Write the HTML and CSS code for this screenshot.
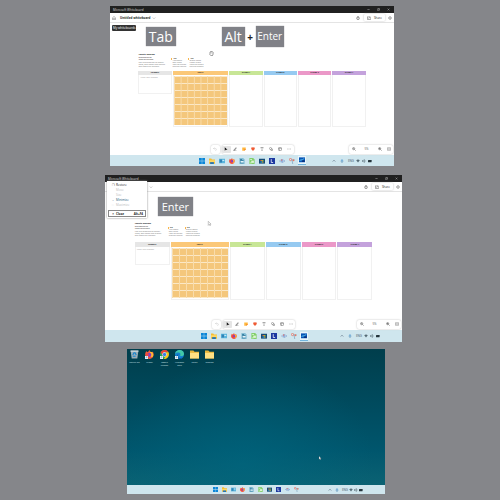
FILE: index.html
```html
<!DOCTYPE html>
<html lang="en">
<head>
<meta charset="utf-8">
<title>Whiteboard keyboard steps</title>
<link rel="stylesheet" href="styles.css">
</head>
<body>
<svg class="sprite" aria-hidden="true">
  <symbol id="home" viewBox="0 0 16 16"><path d="M2 7 8 2l6 5v8h-4v-5H6v5H2z" fill="none" stroke="#555" stroke-width="1.6"/></symbol>
  <symbol id="down" viewBox="0 0 16 16"><path d="m3 6 5 5 5-5" fill="none" stroke="#777" stroke-width="1.5"/></symbol>
  <symbol id="up" viewBox="0 0 16 16"><path d="m3 10 5-5 5 5" fill="none" stroke="#456" stroke-width="2.2"/></symbol>
  <symbol id="min" viewBox="0 0 16 16"><path d="M2 8h12" stroke="#ccc" stroke-width="2.2"/></symbol>
  <symbol id="restore" viewBox="0 0 16 16"><path d="M2 5h9v9H2zM5 5V2h9v9h-3" fill="none" stroke="#ccc" stroke-width="1.8"/></symbol>
  <symbol id="close" viewBox="0 0 16 16"><path d="m3 3 10 10M13 3 3 13" stroke="#ccc" stroke-width="2"/></symbol>
  <symbol id="timer" viewBox="0 0 16 16"><circle cx="8" cy="9" r="5.5" fill="#eee" stroke="#444" stroke-width="1.8"/><path d="M5 1h6M8 5v4" stroke="#444" stroke-width="1.8"/></symbol>
  <symbol id="share" viewBox="0 0 16 16"><path d="M7 3H2v11h12V9M6 10c0-4 3-5 7-5M10 1l4 4-4 4" fill="none" stroke="#444" stroke-width="1.8"/></symbol>
  <symbol id="gear" viewBox="0 0 16 16"><circle cx="8" cy="8" r="5.5" fill="none" stroke="#666" stroke-width="2.8" stroke-dasharray="2.6 1.1"/><circle cx="8" cy="8" r="2.2" fill="none" stroke="#555" stroke-width="1.5"/></symbol>
  <symbol id="undo" viewBox="0 0 16 16"><path d="M6 2 2 6l4 4M2 6h7c6 0 6 8 0 8" fill="none" stroke="#bbb" stroke-width="1.6"/></symbol>
  <symbol id="select" viewBox="0 0 16 16"><path d="M3 1v14l4-4h7z" fill="#111"/></symbol>
  <symbol id="pen" viewBox="0 0 16 16"><path d="m4 11 8-9 2 2-7 9-4 1z" fill="#999" stroke="#444"/><path d="M1 15h13" stroke="#777" stroke-width="2"/></symbol>
  <symbol id="note" viewBox="0 0 16 16"><path d="M1 2h14v8l-5 5H1z" fill="#ffb73c"/><path d="M15 9h-5v6z" fill="#e85a20"/></symbol>
  <symbol id="heart" viewBox="0 0 16 16"><path d="M8 15C-3 8 1 1 5 1c2 0 3 2 3 2s1-2 3-2c4 0 8 7-3 14" fill="#ef5b34"/></symbol>
  <symbol id="text" viewBox="0 0 16 16"><path d="M3 5V2h10v3M8 2v12M6 14h4" fill="none" stroke="#444" stroke-width="1.5"/></symbol>
  <symbol id="shapes" viewBox="0 0 16 16"><circle cx="6" cy="6" r="4.2" fill="none" stroke="#444" stroke-width="1.5"/><path d="M8 8h6v6H8z" fill="#fff" stroke="#444" stroke-width="1.5"/></symbol>
  <symbol id="create" viewBox="0 0 16 16"><rect x="2" y="2" width="12" height="12" rx="2" fill="none" stroke="#555" stroke-width="1.7"/><path d="M2 6h12M6 6v8" stroke="#555" stroke-width="1.5"/></symbol>
  <symbol id="more" viewBox="0 0 16 16"><path d="M2 8h2.5M7 8h2.500M12 8h2.500" stroke="#555" stroke-width="2"/></symbol>
  <symbol id="zoomout" viewBox="0 0 16 16"><circle cx="6.500" cy="6.500" r="4.500" fill="#ddd" stroke="#444" stroke-width="1.6"/><path d="m10 10 5 5M4.500 6.500h4" stroke="#444" stroke-width="1.7"/></symbol>
  <symbol id="zoomin" viewBox="0 0 16 16"><circle cx="6.500" cy="6.500" r="4.500" fill="#ddd" stroke="#444" stroke-width="1.6"/><path d="m10 10 5 5M4 6.500h5M6.500 4v5" stroke="#444" stroke-width="1.7"/></symbol>
  <symbol id="fit" viewBox="0 0 16 16"><rect x="1" y="3" width="14" height="10" rx="1" fill="none" stroke="#555" stroke-width="1.6"/><path d="M5 6v4M11 6v4M7 8h2" stroke="#555" stroke-width="1.6"/></symbol>
  <symbol id="start" viewBox="0 0 16 16"><path d="M0 0h7.500v7.500H0zM8.500 0H16v7.500H8.500zM0 8.500h7.500V16H0zM8.500 8.500H16V16H8.500z" fill="#0a86d8"/></symbol>
  <symbol id="files" viewBox="0 0 16 16"><path d="M0 1h6l2 3h8v11H0z" fill="#f5bd35"/><path d="M0 6h16v5H0z" fill="#ffd965"/><path d="M3 11h10v5H3z" fill="#2676b5"/></symbol>
  <symbol id="panel" viewBox="0 0 16 16"><path d="M0 2h16v12H0z" fill="#5bb5dc"/><path d="M2 4h6v8H2z" fill="#3182b5"/><path d="M9 5h5v3H9z" fill="#c8ecf8"/></symbol>
  <symbol id="fox" viewBox="0 0 16 16"><path d="M2 2l3 2 3-4 2 4 4-1c3 5 1 12-6 13C1 16-2 9 2 2" fill="#f9593a"/><path d="M10 3c5 1 6 6 3 10-3-1-6-4-5-8z" fill="#ffba32"/><circle cx="7.500" cy="8.500" r="3.800" fill="#8540c5"/><path d="M2 7c3-2 5 0 6 1-4 0-3 4 1 5-5 2-8-2-7-6" fill="#f2453f"/></symbol>
  <symbol id="writer" viewBox="0 0 16 16"><path d="M1 0h10l4 4v12H1z" fill="#84bed5"/><path d="M3 4h5M3 7h9M3 13h9" stroke="#206c91" stroke-width="2"/><path d="M5 8h7v4H5z" fill="#e5f4fa"/></symbol>
  <symbol id="calc" viewBox="0 0 16 16"><path d="M1 0h10l4 4v12H1z" fill="#83cf6c"/><path d="M3 4h5M3 13h4" stroke="#e5ffe0" stroke-width="2"/><path d="M6 7h7v6H6z" fill="#def5d5"/></symbol>
  <symbol id="store" viewBox="0 0 16 16"><path d="M0 2h16v13H0z" fill="#174d77"/><path d="M4 5h4v3H4z" fill="#ed6b35"/><path d="M8 5h4v3H8z" fill="#9cc63e"/><path d="M4 9h4v3H4z" fill="#36aee6"/><path d="M8 9h4v3H8z" fill="#f5c838"/></symbol>
  <symbol id="ell" viewBox="0 0 16 16"><path d="M0 0h16v16H0z" fill="#1c38a0"/><path d="M6 3v9h5" fill="none" stroke="#fff" stroke-width="2"/></symbol>
  <symbol id="speak" viewBox="0 0 16 16"><path d="M1 8h3M6 4v8M10 3v10M14 6v4" stroke="#7c9bd0" stroke-width="2.500"/><circle cx="7" cy="5" r="2" fill="#d87272"/></symbol>
  <symbol id="snip" viewBox="0 0 16 16"><circle cx="4" cy="4" r="3" fill="#f5dddd" stroke="#e0705f" stroke-width="2"/><path d="M6 5h9M8 5l2 11" stroke="#7fa6c0" stroke-width="2"/><circle cx="12" cy="6" r="2.500" fill="#e97862"/></symbol>
  <symbol id="board" viewBox="0 0 16 16"><path d="M0 1h16v13H0z" fill="#0754b5"/><path d="M2 10c4-6 6 2 11-6" stroke="#70dcff" stroke-width="2.500" fill="none"/><path d="M8 9h7v4H8z" fill="#0b2d76"/></symbol>
  <symbol id="mic" viewBox="0 0 16 16"><rect x="5" y="1" width="6" height="9" rx="3" fill="#63a4d4"/><path d="M3 7c0 7 10 7 10 0M8 12v4" fill="none" stroke="#3978a8" stroke-width="1.600"/></symbol>
  <symbol id="wifi" viewBox="0 0 16 16"><path d="M1 5c5-4 9-4 14 0L8 14z" fill="#556a74"/></symbol>
  <symbol id="vol" viewBox="0 0 16 16"><path d="M1 6h4l4-4v12l-4-4H1zM11 5c2 2 2 4 0 6" fill="none" stroke="#455963" stroke-width="2"/></symbol>
  <symbol id="bat" viewBox="0 0 16 16"><rect y="4" width="14" height="9" rx="1" fill="#25353c"/><path d="M15 7v3" stroke="#25353c" stroke-width="2"/></symbol>
  <symbol id="arrow" viewBox="0 0 16 16"><path d="M4 1v13l3-3 2 4 2-1-2-4h4z" fill="#fff" stroke="#555"/></symbol>
  <symbol id="hand" viewBox="0 0 16 16"><path d="M3 8V4l2-1 1-2 3 0 2 1 2 2v6l-2 5H6L2 10z" fill="#fff" stroke="#444" stroke-width="1.700"/><path d="M6 3v5M9 2v6" stroke="#777"/></symbol>
  <symbol id="bin" viewBox="0 0 16 16"><path d="m1 1 2 14h10l2-14z" fill="#9caeb6"/><path d="M1 1h14v2H1z" fill="#d5dfe3"/><path d="m5 9 2-4h2l2 4M10 11H5" fill="none" stroke="#1685cf" stroke-width="2"/></symbol>
  <symbol id="chrome" viewBox="0 0 16 16"><circle cx="8" cy="8" r="8" fill="#2da94f"/><path d="M1 4c4-6 12-5 14 0H8L5 10z" fill="#ea4335"/><path d="M15 4c3 6-2 13-8 12l4-7V4z" fill="#fbc116"/><circle cx="8" cy="8" r="3.800" fill="#fff"/><circle cx="8" cy="8" r="3" fill="#347ee8"/></symbol>
  <symbol id="edge" viewBox="0 0 16 16"><circle cx="8" cy="8" r="8" fill="#1482cf"/><path d="M0 7C2-3 16-2 16 7c0 4-5 4-7 3 3-6-5-7-9-3" fill="#42c8a7"/><path d="M6 7c-3 6 3 9 8 6-3 5-10 3-11-1 0-3 1-4 3-5" fill="#0753a1"/></symbol>
  <symbol id="folder" viewBox="0 0 16 16"><path d="M0 1h6l2 2h8v12H0z" fill="#e7b53a"/><path d="M0 5h16v10H0z" fill="#ffe083"/></symbol>
  <symbol id="link" viewBox="0 0 16 16"><path d="M0 0h16v16H0z" fill="#eef4f8"/><path d="M4 12c0-5 2-6 7-6M8 3l4 3-4 3" fill="none" stroke="#246eb5" stroke-width="2"/></symbol>
</svg>

<main>
  <section class="window first">
    <header class="titlebar"><span>Microsoft Whiteboard</span>
      <div class="controls"><button aria-label="Minimize"><svg><use href="#min"/></svg></button><button aria-label="Restore"><svg><use href="#restore"/></svg></button><button aria-label="Close"><svg><use href="#close"/></svg></button></div>
    </header>
    <div class="appbar">
      <button class="home" aria-label="My whiteboards"><svg><use href="#home"/></svg></button>
      <button class="name">Untitled whiteboard <svg><use href="#down"/></svg></button>
      <button class="timer" aria-label="Timer"><svg><use href="#timer"/></svg></button>
      <button class="share"><svg><use href="#share"/></svg>Share</button>
      <button class="settings" aria-label="Settings"><svg><use href="#gear"/></svg></button>
      <span class="tooltip" role="tooltip">My whiteboards</span>
    </div>
    <div class="canvas">
      <div class="keys"><kbd class="tab">Tab</kbd><div class="combo"><kbd class="alt">Alt</kbd><b>+</b><kbd class="enter">Enter</kbd></div></div>
      <svg class="pointer"><use href="#hand"/></svg>
      <div class="intro">
        <div><h2>Affinity diagram</h2><p class="sub">Brainstorming<br>Ideas to themes</p><p>Use this template to gather ideas, sort notes into groups and name the themes.</p></div>
        <div class="tips"><h3>Tip</h3><p>Add notes<br>Sort ideas<br>Vote on theme<br>Discuss results</p></div>
        <div class="tips"><h3>Tip</h3><p>Group notes<br>Name group<br>Move to theme<br>Review themes</p></div>
      </div>
      <div class="columns">
        <section class="topic"><h4>PROMPT</h4><p>Write your prompt</p></section>
        <section class="ideas"><h4>IDEAS</h4><div class="notes"></div></section>
        <section class="green"><h4>THEME 1</h4></section>
        <section class="blue"><h4>THEME 2</h4></section>
        <section class="pink"><h4>THEME 3</h4></section>
        <section class="purple"><h4>THEME 4</h4></section>
      </div>
    </div>
    <div class="tools">
      <div class="center"><div class="bar"><button aria-label="Undo"><svg><use href="#undo"/></svg></button></div>
      <div class="bar"><button class="on" aria-label="Select"><svg><use href="#select"/></svg></button><button aria-label="Ink"><svg><use href="#pen"/></svg></button><button aria-label="Notes"><svg><use href="#note"/></svg></button><button aria-label="Reactions"><svg><use href="#heart"/></svg></button><button aria-label="Text"><svg><use href="#text"/></svg></button><button aria-label="Shapes"><svg><use href="#shapes"/></svg></button><button aria-label="Create"><svg><use href="#create"/></svg></button><button aria-label="More"><svg><use href="#more"/></svg></button></div></div>
      <div class="bar zoom"><button aria-label="Zoom out"><svg><use href="#zoomout"/></svg></button><span>5%</span><button aria-label="Zoom in"><svg><use href="#zoomin"/></svg></button><button aria-label="Fit"><svg><use href="#fit"/></svg></button></div>
    </div>
    <footer class="taskbar">
      <nav><button aria-label="Start"><svg><use href="#start"/></svg></button><button aria-label="Explorer"><svg><use href="#files"/></svg></button><button aria-label="Control Panel"><svg><use href="#panel"/></svg></button><button aria-label="Firefox"><svg><use href="#fox"/></svg></button><button aria-label="Writer"><svg><use href="#writer"/></svg></button><button aria-label="Calc"><svg><use href="#calc"/></svg></button><button aria-label="Store"><svg><use href="#store"/></svg></button><button aria-label="Lexicon"><svg><use href="#ell"/></svg></button><button aria-label="Speech"><svg><use href="#speak"/></svg></button><button aria-label="Snipping Tool"><svg><use href="#snip"/></svg></button><button class="active" aria-label="Whiteboard"><svg><use href="#board"/></svg></button></nav>
      <div class="tray"><svg><use href="#up"/></svg><svg><use href="#mic"/></svg><span>ENG</span><svg><use href="#wifi"/></svg><svg><use href="#vol"/></svg><svg><use href="#bat"/></svg></div>
    </footer>
  </section>

  <section class="window second">
    <header class="titlebar"><span>Microsoft Whiteboard</span>
      <div class="controls"><button aria-label="Minimize"><svg><use href="#min"/></svg></button><button aria-label="Restore"><svg><use href="#restore"/></svg></button><button aria-label="Close"><svg><use href="#close"/></svg></button></div>
    </header>
    <div class="appbar">
      <button class="name" aria-label="Board name"><svg><use href="#down"/></svg></button>
      <button class="timer" aria-label="Timer"><svg><use href="#timer"/></svg></button>
      <button class="share"><svg><use href="#share"/></svg>Share</button>
      <button class="settings" aria-label="Settings"><svg><use href="#gear"/></svg></button>
      <div class="menu">
        <button><i>❐</i><span>Restore</span></button><button disabled><i></i><span>Move</span></button><button disabled><i></i><span>Size</span></button><button class="blueish"><i>–</i><span>Minimize</span></button><button disabled><i>□</i><span>Maximize</span></button><button class="chosen"><i>×</i><span>Close</span><kbd>Alt+F4</kbd></button>
      </div>
    </div>
    <div class="canvas">
      <div class="keys"><kbd class="enter">Enter</kbd></div>
      <svg class="pointer"><use href="#arrow"/></svg>
      <div class="intro">
        <div><h2>Affinity diagram</h2><p class="sub">Brainstorming<br>Ideas to themes</p><p>Use this template to gather ideas, sort notes into groups and name the themes.</p></div>
        <div class="tips"><h3>Tip</h3><p>Add notes<br>Sort ideas<br>Vote on theme<br>Discuss results</p></div>
        <div class="tips"><h3>Tip</h3><p>Group notes<br>Name group<br>Move to theme<br>Review themes</p></div>
      </div>
      <div class="columns">
        <section class="topic"><h4>PROMPT</h4><p>Write your prompt</p></section>
        <section class="ideas"><h4>IDEAS</h4><div class="notes"></div></section>
        <section class="green"><h4>THEME 1</h4></section>
        <section class="blue"><h4>THEME 2</h4></section>
        <section class="pink"><h4>THEME 3</h4></section>
        <section class="purple"><h4>THEME 4</h4></section>
      </div>
    </div>
    <div class="tools">
      <div class="center"><div class="bar"><button aria-label="Undo"><svg><use href="#undo"/></svg></button></div>
      <div class="bar"><button class="on" aria-label="Select"><svg><use href="#select"/></svg></button><button aria-label="Ink"><svg><use href="#pen"/></svg></button><button aria-label="Notes"><svg><use href="#note"/></svg></button><button aria-label="Reactions"><svg><use href="#heart"/></svg></button><button aria-label="Text"><svg><use href="#text"/></svg></button><button aria-label="Shapes"><svg><use href="#shapes"/></svg></button><button aria-label="Create"><svg><use href="#create"/></svg></button><button aria-label="More"><svg><use href="#more"/></svg></button></div></div>
      <div class="bar zoom"><button aria-label="Zoom out"><svg><use href="#zoomout"/></svg></button><span>5%</span><button aria-label="Zoom in"><svg><use href="#zoomin"/></svg></button><button aria-label="Fit"><svg><use href="#fit"/></svg></button></div>
    </div>
    <footer class="taskbar">
      <nav><button aria-label="Start"><svg><use href="#start"/></svg></button><button aria-label="Explorer"><svg><use href="#files"/></svg></button><button aria-label="Control Panel"><svg><use href="#panel"/></svg></button><button aria-label="Firefox"><svg><use href="#fox"/></svg></button><button aria-label="Writer"><svg><use href="#writer"/></svg></button><button aria-label="Calc"><svg><use href="#calc"/></svg></button><button aria-label="Store"><svg><use href="#store"/></svg></button><button aria-label="Lexicon"><svg><use href="#ell"/></svg></button><button aria-label="Speech"><svg><use href="#speak"/></svg></button><button aria-label="Snipping Tool"><svg><use href="#snip"/></svg></button><button class="active" aria-label="Whiteboard"><svg><use href="#board"/></svg></button></nav>
      <div class="tray"><svg><use href="#up"/></svg><svg><use href="#mic"/></svg><span>ENG</span><svg><use href="#wifi"/></svg><svg><use href="#vol"/></svg><svg><use href="#bat"/></svg></div>
    </footer>
  </section>

  <section class="window desktop">
    <div class="wallpaper">
      <a href="#bin"><svg><use href="#bin"/></svg>Recycle Bin</a>
      <a href="#fox"><svg><use href="#fox"/></svg><svg class="badge"><use href="#link"/></svg>Firefox</a>
      <a href="#chrome"><svg><use href="#chrome"/></svg><svg class="badge"><use href="#link"/></svg>Google Chrome</a>
      <a href="#edge"><svg><use href="#edge"/></svg><svg class="badge"><use href="#link"/></svg>Microsoft Edge</a>
      <a href="#folder"><svg><use href="#folder"/></svg>Folder</a>
      <a href="#folder"><svg><use href="#folder"/></svg>Tutorials</a>
      <svg class="pointer"><use href="#arrow"/></svg>
    </div>
    <footer class="taskbar">
      <nav><button aria-label="Start"><svg><use href="#start"/></svg></button><button aria-label="Explorer"><svg><use href="#files"/></svg></button><button aria-label="Control Panel"><svg><use href="#panel"/></svg></button><button aria-label="Firefox"><svg><use href="#fox"/></svg></button><button aria-label="Writer"><svg><use href="#writer"/></svg></button><button aria-label="Calc"><svg><use href="#calc"/></svg></button><button aria-label="Store"><svg><use href="#store"/></svg></button><button aria-label="Lexicon"><svg><use href="#ell"/></svg></button><button aria-label="Speech"><svg><use href="#speak"/></svg></button><button aria-label="Snipping Tool"><svg><use href="#snip"/></svg></button></nav>
      <div class="tray"><svg><use href="#up"/></svg><svg><use href="#mic"/></svg><span>ENG</span><svg><use href="#wifi"/></svg><svg><use href="#vol"/></svg><svg><use href="#bat"/></svg></div>
    </footer>
  </section>
</main>
</body>
</html>
```
FILE: styles.css
```css
* { box-sizing: border-box; }
body {
  margin: 0;
  min-height: 100vh;
  background: #85868a;
  color: #222;
  font: 3px/4px "Open Sans", "Noto Sans", sans-serif;
}
.sprite { position: absolute; width: 0; height: 0; }
svg { display: block; flex: none; width: 4px; height: 4px; }
button {
  display: flex;
  align-items: center;
  justify-content: center;
  padding: 0;
  border: 0;
  background: none;
  color: inherit;
  font: inherit;
}
h2, h3, h4, p { margin: 0; }
kbd { font-family: inherit; }
main { padding: 6px 0; }

.window { background: #fff; }
.first { width: 56.8%; margin: 0 0 9px 22%; }
.second { width: 59.4%; margin: 0 0 7px 21%; }
.desktop { width: 51.6%; margin-left: 25.4%; }

.titlebar {
  display: flex;
  align-items: center;
  justify-content: space-between;
  height: 7px;
  padding: 0 4px 0 3px;
  background: #202020;
  color: #ddd;
}
.controls { display: flex; gap: 7px; }
.controls svg { width: 3px; height: 3px; }

.appbar {
  position: relative;
  display: flex;
  align-items: center;
  height: 10px;
  padding: 0 2px;
  border-bottom: 1px solid #e4e4e4;
}
.name { gap: 2px; margin: 0 auto 0 4px; font-weight: 700; }
.second .name { margin-left: 42px; }
.share {
  gap: 3px;
  margin: 0 3px 0 4px;
  padding: 0 3px;
  height: 7px;
  border-radius: 1px;
  box-shadow: 0 0 2px #bbb;
}
.tooltip {
  position: absolute;
  top: 12px;
  left: 2px;
  padding: 1px;
  border-radius: 1px;
  background: #333;
  color: #fff;
}
.menu {
  position: absolute;
  z-index: 2;
  top: -1px;
  left: 2px;
  width: 40px;
  padding: 1px;
  background: #fff;
  box-shadow: 0 0 2px #888;
}
.menu button { width: 100%; height: 5px; justify-content: flex-start; }
.menu i { width: 8px; padding-left: 2px; font-style: normal; }
.menu button:disabled { color: #bbb; }
.menu .blueish { color: #245878; }
.menu .chosen { height: 7px; margin-top: 3px; border: 1px solid #888; font-weight: 700; }
.menu .chosen i { width: 7px; padding-left: 1px; }
.menu kbd { margin-left: auto; padding-right: 2px; }

.canvas { position: relative; }
.keys { display: flex; align-items: center; }
.keys kbd {
  display: grid;
  place-items: center;
  height: 19px;
  background: #808187;
  box-shadow: 0 0 1px #808187;
  color: #fff;
  font-size: 14px;
  line-height: 19px;
}
.keys .enter { width: 28px; font-size: 10px; }
.first .keys { gap: 18.5%; padding: 3px 0 0 12.6%; }
.first .tab { width: 30px; }
.first .alt { width: 23px; }
.first .keys .enter { height: 21px; }
.combo { display: flex; align-items: center; gap: 2px; }
.combo b { width: 7px; text-align: center; font-size: 10px; line-height: 10px; }
.second .keys { padding: 5px 0 0 17.8%; }
.second .keys .enter { width: 35px; font-size: 11px; }
.pointer { position: absolute; width: 5px; height: 5px; }
.first .pointer { top: 28px; left: 35%; }
.second .pointer { top: 29px; left: 34.5%; }

.intro {
  display: flex;
  gap: 3px;
  height: 18px;
  margin: 6px 10% 0;
  font-size: 2px;
  line-height: 2px;
  color: #777;
}
.second .intro { height: 20px; }
.intro > div:first-child { width: 30px; }
.intro h2 { margin-bottom: 1px; color: #111; font-size: 2px; line-height: 3px; }
.intro .sub { margin-bottom: 1px; color: #333; }
.tips { width: 14px; margin-top: 5px; white-space: nowrap; }
.tips h3 { border-left: 1px solid #f7b64d; padding-left: 1px; color: #333; font-size: 2px; line-height: 2px; }
.tips p { padding-left: 1px; }

.columns {
  display: grid;
  grid-template-columns: 33fr 55fr repeat(4, 33fr);
  gap: 1px;
  margin: 0 10%;
}
.columns section { border: 1px solid #f1f1f1; border-top: 0; }
.columns h4 {
  height: 4px;
  margin: 0 -1px;
  background: #e6e6e6;
  font-size: 2px;
  line-height: 4px;
  text-align: center;
}
.columns .topic { align-self: start; height: 23px; }
.topic p { padding: 2px 1px; color: #999; font-size: 2px; line-height: 2px; }
.columns .ideas h4 { background: #fbc878; }
.columns .green h4 { background: #c8e696; }
.columns .blue h4 { background: #96caf1; }
.columns .pink h4 { background: #eb98c8; }
.columns .purple h4 { background: #c4a2dc; }
.notes {
  height: 49px;
  margin: 1px 0;
  background:
    linear-gradient(90deg, #f9dcaa 1px, transparent 1px) 0 0 / 12.5% 100%,
    linear-gradient(#fbe8c6 1px, transparent 1px) 0 0 / 100% 7px,
    #f4c77c;
}
.second .columns h4 { height: 5px; line-height: 5px; }
.second .notes { height: 50px; }

.tools {
  display: grid;
  grid-template-columns: 1fr auto 1fr;
  align-items: center;
  height: 10px;
  margin: 17px 1px 1px;
}
.tools .center { display: flex; gap: 2px; grid-column: 2; }
.bar {
  display: flex;
  align-items: center;
  height: 9px;
  border-radius: 2px;
  background: #fff;
  box-shadow: 0 0 2px #bbb;
}
.bar button { width: 9px; height: 7px; }
.bar .on { border-radius: 1px; background: #e5e5e5; }
.zoom { justify-self: end; }
.zoom span { width: 17px; text-align: center; color: #555; }
.second .tools { margin-top: 19px; }

.taskbar {
  display: grid;
  grid-template-columns: 1fr auto 1fr;
  align-items: center;
  height: 11px;
  background: #cfe6ee;
}
.second .taskbar { height: 12px; }
.taskbar nav { display: flex; grid-column: 2; }
.taskbar nav button { width: 10px; height: 9px; }
.taskbar nav svg { width: 6px; height: 6px; }
.taskbar nav .active { width: 8px; margin: 0 1px; background: #e9f5fa; border-bottom: 1px solid #72b5de; }
.tray { display: flex; align-items: center; justify-self: end; gap: 2px; margin-right: 22px; color: #456; }
.tray svg:nth-child(2) { margin: 0 2px; }

.wallpaper {
  position: relative;
  display: flex;
  align-items: flex-start;
  height: 136px;
  background:
    radial-gradient(ellipse at 45% 85%, #006780a0, transparent 65%),
    linear-gradient(#003e4c, #004c60 45%, #00566d 75%, #0b6273);
}
.wallpaper a {
  position: relative;
  width: 15px;
  padding: 1px 2px 0;
  color: #d8e7ec;
  font-size: 2px;
  line-height: 3px;
  text-align: center;
  text-decoration: none;
}
.wallpaper a svg { width: 9px; height: 9px; margin: 0 auto 2px; }
.wallpaper a .badge { position: absolute; top: 7px; left: 3px; width: 3px; height: 3px; }
.desktop .pointer { top: 107px; left: 74%; width: 4px; height: 4px; }
.desktop .taskbar { height: 9px; }
.desktop nav button { width: 9px; }
.desktop nav svg { width: 5px; height: 5px; }
.desktop .tray { gap: 1px; }
```
